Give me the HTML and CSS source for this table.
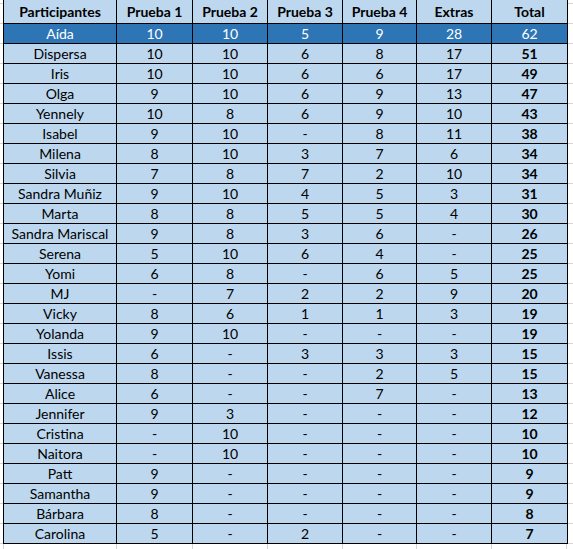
FILE: index.html
```html
<!DOCTYPE html>
<html lang="es">
<head>
<meta charset="utf-8">
<title>Participantes</title>
<link rel="stylesheet" href="styles.css">
</head>
<body>
<div class="sheet">
<table class="scores">
<colgroup>
<col class="c-name"><col class="c-p1"><col class="c-p2"><col class="c-p3"><col class="c-p4"><col class="c-ex"><col class="c-tot">
</colgroup>
<thead>
<tr><th>Participantes</th><th>Prueba 1</th><th>Prueba 2</th><th>Prueba 3</th><th>Prueba 4</th><th>Extras</th><th>Total</th></tr>
</thead>
<tbody>
<tr class="selected"><td>Aída</td><td>10</td><td>10</td><td>5</td><td>9</td><td>28</td><td class="total">62</td></tr>
<tr><td>Dispersa</td><td>10</td><td>10</td><td>6</td><td>8</td><td>17</td><td class="total">51</td></tr>
<tr><td>Iris</td><td>10</td><td>10</td><td>6</td><td>6</td><td>17</td><td class="total">49</td></tr>
<tr><td>Olga</td><td>9</td><td>10</td><td>6</td><td>9</td><td>13</td><td class="total">47</td></tr>
<tr><td>Yennely</td><td>10</td><td>8</td><td>6</td><td>9</td><td>10</td><td class="total">43</td></tr>
<tr><td>Isabel</td><td>9</td><td>10</td><td>-</td><td>8</td><td>11</td><td class="total">38</td></tr>
<tr><td>Milena</td><td>8</td><td>10</td><td>3</td><td>7</td><td>6</td><td class="total">34</td></tr>
<tr><td>Silvia</td><td>7</td><td>8</td><td>7</td><td>2</td><td>10</td><td class="total">34</td></tr>
<tr><td>Sandra Muñiz</td><td>9</td><td>10</td><td>4</td><td>5</td><td>3</td><td class="total">31</td></tr>
<tr><td>Marta</td><td>8</td><td>8</td><td>5</td><td>5</td><td>4</td><td class="total">30</td></tr>
<tr><td>Sandra Mariscal</td><td>9</td><td>8</td><td>3</td><td>6</td><td>-</td><td class="total">26</td></tr>
<tr><td>Serena</td><td>5</td><td>10</td><td>6</td><td>4</td><td>-</td><td class="total">25</td></tr>
<tr><td>Yomi</td><td>6</td><td>8</td><td>-</td><td>6</td><td>5</td><td class="total">25</td></tr>
<tr><td>MJ</td><td>-</td><td>7</td><td>2</td><td>2</td><td>9</td><td class="total">20</td></tr>
<tr><td>Vicky</td><td>8</td><td>6</td><td>1</td><td>1</td><td>3</td><td class="total">19</td></tr>
<tr><td>Yolanda</td><td>9</td><td>10</td><td>-</td><td>-</td><td>-</td><td class="total">19</td></tr>
<tr><td>Issis</td><td>6</td><td>-</td><td>3</td><td>3</td><td>3</td><td class="total">15</td></tr>
<tr><td>Vanessa</td><td>8</td><td>-</td><td>-</td><td>2</td><td>5</td><td class="total">15</td></tr>
<tr><td>Alice</td><td>6</td><td>-</td><td>-</td><td>7</td><td>-</td><td class="total">13</td></tr>
<tr><td>Jennifer</td><td>9</td><td>3</td><td>-</td><td>-</td><td>-</td><td class="total">12</td></tr>
<tr><td>Cristina</td><td>-</td><td>10</td><td>-</td><td>-</td><td>-</td><td class="total">10</td></tr>
<tr><td>Naitora</td><td>-</td><td>10</td><td>-</td><td>-</td><td>-</td><td class="total">10</td></tr>
<tr><td>Patt</td><td>9</td><td>-</td><td>-</td><td>-</td><td>-</td><td class="total">9</td></tr>
<tr><td>Samantha</td><td>9</td><td>-</td><td>-</td><td>-</td><td>-</td><td class="total">9</td></tr>
<tr><td>Bárbara</td><td>8</td><td>-</td><td>-</td><td>-</td><td>-</td><td class="total">8</td></tr>
<tr><td>Carolina</td><td>5</td><td>-</td><td>2</td><td>-</td><td>-</td><td class="total">7</td></tr>
</tbody>
</table>
</div>
</body>
</html>
```

FILE: styles.css
```css
html, body {
  margin: 0;
  padding: 0;
  background: #fff;
}

.sheet {
  width: 573px;
  height: 549px;
  overflow: hidden;
  box-sizing: border-box;
  padding-left: 3px;
  background-image:
    linear-gradient(to right, transparent 3px, #d4d4d4 3px, #d4d4d4 4px, transparent 4px),
    linear-gradient(to right, transparent 116px, #d4d4d4 116px, #d4d4d4 117px, transparent 117px),
    linear-gradient(to right, transparent 192px, #d4d4d4 192px, #d4d4d4 193px, transparent 193px),
    linear-gradient(to right, transparent 267px, #d4d4d4 267px, #d4d4d4 268px, transparent 268px),
    linear-gradient(to right, transparent 342px, #d4d4d4 342px, #d4d4d4 343px, transparent 343px),
    linear-gradient(to right, transparent 416px, #d4d4d4 416px, #d4d4d4 417px, transparent 417px),
    linear-gradient(to right, transparent 491px, #d4d4d4 491px, #d4d4d4 492px, transparent 492px),
    linear-gradient(to right, transparent 566px, #d4d4d4 566px, #d4d4d4 567px, transparent 567px),
    repeating-linear-gradient(to bottom, transparent 0, transparent 3px, #d4d4d4 3px, #d4d4d4 4px, transparent 4px, transparent 20px);
}

.scores {
  border-collapse: collapse;
  table-layout: fixed;
  width: 564px;
  font-family: Lato, "Liberation Sans", sans-serif;
  font-size: 14px;
  color: #000;
}

.c-name { width: 113px; }
.c-p1 { width: 76px; }
.c-p2 { width: 75px; }
.c-p3 { width: 75px; }
.c-p4 { width: 74px; }
.c-ex { width: 75px; }
.c-tot { width: 76px; }

.scores th,
.scores td {
  border: 1px solid #000;
  padding: 0;
  height: 19px;
  line-height: 19px;
  text-align: center;
  background: #bdd7ee;
  white-space: nowrap;
}

.scores th {
  border-top: none;
  height: 22px;
  line-height: 23px;
  font-weight: bold;
}

.scores .total {
  font-weight: bold;
}

.scores .selected td {
  background: #2e75b6;
  color: #fff;
}

.scores .selected .total {
  font-weight: normal;
}
```
